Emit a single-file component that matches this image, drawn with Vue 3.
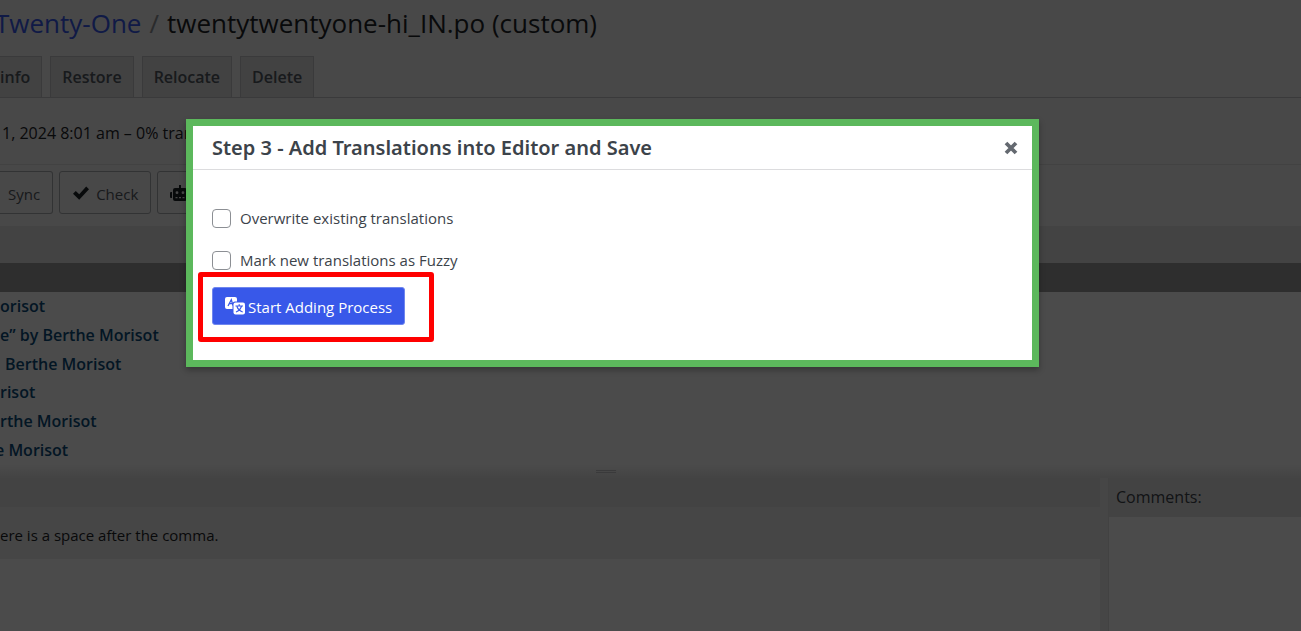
<template>
  <div class="screen">
    <main class="page">
      <header class="page-head">
        <h1 class="title">
          <a href="#" class="crumb">Twenty-One</a>
          <span class="slash">/</span>
          <span>twentytwentyone-hi_IN.po (custom)</span>
        </h1>
        <nav class="tabs">
          <a v-for="tab in tabs" :key="tab" href="#" class="tab">{{ tab }}</a>
        </nav>
      </header>

      <p class="status">1, 2024 8:01 am – 0% translated</p>

      <div class="toolbar">
        <button type="button" class="tool tool-first">Sync</button>
        <button type="button" class="tool">
          <svg class="tool-icon" viewBox="0 0 18 16" aria-hidden="true">
            <path d="M1 8.8 3.8 6l3.4 3.3L14.2 1.6 17 4.3 7.2 14.8z" fill="currentColor" />
          </svg>
          Check
        </button>
        <button type="button" class="tool" aria-label="Auto">
          <svg class="tool-icon robot" viewBox="0 0 20 16" aria-hidden="true">
            <path
              fill="currentColor"
              fill-rule="evenodd"
              d="M9 0h2v3h4a2 2 0 0 1 2 2v9a2 2 0 0 1-2 2H5a2 2 0 0 1-2-2V5a2 2 0 0 1 2-2h4zM7 6.3a1.4 1.4 0 1 0 0 2.8 1.4 1.4 0 0 0 0-2.8zm6 0a1.4 1.4 0 1 0 0 2.8 1.4 1.4 0 0 0 0-2.8zM5.5 12v1.3h2V12zm3.5 0v1.3h2V12zm3.5 0v1.3h2V12zM0 8a1 1 0 0 1 1-1h1v6H1a1 1 0 0 1-1-1zM18 7h1a1 1 0 0 1 1 1v4a1 1 0 0 1-1 1h-1z"
            />
          </svg>
        </button>
      </div>

      <div class="list-head"></div>
      <div class="selected-row"></div>
      <ul class="strings">
        <li v-for="row in rows" :key="row">{{ row }}</li>
      </ul>
      <div class="splitter"><span class="grip"></span></div>

      <section class="editor">
        <div class="source">
          <div class="source-head"></div>
          <p class="source-text">ere is a space after the comma.</p>
          <textarea class="target" aria-label="Translation"></textarea>
        </div>
        <div class="comments">
          <label for="comments" class="comments-label">Comments:</label>
          <textarea id="comments" class="comments-box"></textarea>
        </div>
      </section>
    </main>

    <div class="overlay">
      <div class="modal" role="dialog" aria-labelledby="modal-title">
        <div class="modal-head">
          <h2 id="modal-title">Step 3 - Add Translations into Editor and Save</h2>
          <button type="button" class="close" aria-label="Close">
            <svg viewBox="0 0 14 14" aria-hidden="true">
              <path d="M2 2l10 10M12 2L2 12" stroke="currentColor" stroke-width="3.8" />
            </svg>
          </button>
        </div>
        <div class="modal-body">
          <label class="option">
            <input v-model="overwrite" type="checkbox">
            Overwrite existing translations
          </label>
          <label class="option">
            <input v-model="fuzzy" type="checkbox">
            Mark new translations as Fuzzy
          </label>
          <div class="action">
            <button type="button" class="start">
              <svg viewBox="0 0 20 18" aria-hidden="true">
                <rect x="0" y="0" width="12" height="12" rx="2" fill="#fff" />
                <path d="M3 9 6.3 2.8 8 8.5M4.3 6.7h3" fill="none" stroke="#3858e9" stroke-width="1.3" />
                <rect x="7.5" y="4.5" width="13" height="13" rx="2.5" fill="#3858e9" />
                <rect x="8.5" y="5.5" width="11.5" height="12" rx="2" fill="#fff" />
                <path d="M10.5 9h7.5M14.2 7.3V9M16.5 9c-.8 3-2.8 5-5.5 6M12 9.5c.8 2.5 3 4.5 5.7 5.5" fill="none" stroke="#3858e9" stroke-width="1.2" />
              </svg>
              Start Adding Process
            </button>
            <span class="highlight"></span>
          </div>
        </div>
      </div>
    </div>
  </div>
</template>

<script setup>
import { ref } from 'vue';

const tabs = ['info', 'Restore', 'Relocate', 'Delete'];

const rows = [
  'orisot',
  'e” by Berthe Morisot',
  'Berthe Morisot',
  'risot',
  'rthe Morisot',
  'e Morisot'
];

const overwrite = ref(false);
const fuzzy = ref(false);
</script>

<style>
body {
  margin: 0;
  background: #f0f0f1;
}
</style>

<style scoped>
.screen {
  position: relative;
  min-height: 100vh;
  overflow: hidden;
  font-family: "Open Sans", "Noto Sans", sans-serif;
  font-size: 15px;
  color: #3c434a;
}

.screen * {
  box-sizing: border-box;
}

.page {
  display: flex;
  flex-direction: column;
  min-height: 100vh;
  background: #f0f0f1;
}

.page-head {
  display: flex;
  flex-direction: column;
  justify-content: space-between;
  height: 98px;
  border-bottom: 1px solid #c3c4c7;
}

.title {
  display: flex;
  gap: 8px;
  margin: 0 0 0 -5px;
  font-size: 26px;
  font-weight: 400;
  line-height: 46px;
  color: #1d2327;
}

.crumb {
  color: #3858e9;
  text-decoration: none;
}

.slash {
  color: #8c8f94;
}

.tabs {
  display: flex;
  gap: 8px;
}

.tab {
  padding: 0 11px;
  border: 1px solid #c3c4c7;
  border-bottom: 0;
  background: #dcdcde;
  color: #50575e;
  font-size: 16px;
  font-weight: 600;
  line-height: 40px;
  text-decoration: none;
}

.tab:first-child {
  padding-left: 0;
  border-left: 0;
}

.status {
  margin: 0;
  padding-left: 2px;
  height: 67px;
  border-bottom: 1px solid #dcdcde;
  font-size: 16px;
  line-height: 70px;
  color: #1d2327;
}

.toolbar {
  display: flex;
  gap: 6px;
  height: 61px;
  padding-top: 6px;
}

.tool {
  display: flex;
  align-items: center;
  gap: 6px;
  height: 43px;
  padding: 2px 12px 0;
  border: 1px solid #a7aaad;
  border-radius: 3px;
  background: transparent;
  color: #50575e;
  font-family: inherit;
  font-size: 15px;
}

.tool-first {
  padding-left: 8px;
  border-left: 0;
  border-radius: 0 3px 3px 0;
}

.tool-icon {
  width: 18px;
  height: 16px;
  margin-bottom: 2px;
  color: #1d2327;
}

.robot {
  width: 20px;
}

.list-head {
  height: 37px;
  background: #e2e2e2;
}

.selected-row {
  height: 29px;
  background: #999;
}

.strings {
  display: grid;
  grid-template-rows: repeat(6, 1fr);
  align-items: center;
  height: 172px;
  margin: 0;
  padding: 0;
  background: #fcfcfc;
  list-style: none;
  font-size: 16px;
  font-weight: 600;
  color: #0a4b78;
}

.strings li:nth-child(3) {
  padding-left: 5px;
}

.strings li:last-child {
  margin-left: -5px;
}

.splitter {
  display: flex;
  justify-content: center;
  align-items: center;
  height: 14px;
  padding-right: 90px;
  background: linear-gradient(#fcfcfc, #e2e2e2);
}

.grip {
  width: 20px;
  height: 3px;
  border: solid #c3c4c7;
  border-width: 1px 0;
}

.editor {
  display: flex;
  flex: 1;
  gap: 8px;
  background: #ebebeb;
}

.source {
  display: flex;
  flex: 1;
  flex-direction: column;
}

.source-head {
  height: 29px;
  background: #e2e2e2;
}

.source-text {
  margin: 0;
  height: 52px;
  line-height: 56px;
  color: #1d2327;
}

.target,
.comments-box {
  flex: 1;
  width: 100%;
  margin: 0;
  border: 0;
  background: #fcfcfc;
  resize: none;
}

.comments {
  display: flex;
  flex-direction: column;
  width: 193px;
  border-left: 1px solid #dcdcde;
}

.comments-label {
  padding-left: 7px;
  height: 39px;
  background: #e2e2e2;
  font-size: 16px;
  line-height: 38px;
}

.overlay {
  position: absolute;
  inset: 0;
  padding: 119px 262px 0 186px;
  background: rgba(0, 0, 0, 0.7);
}

.modal {
  border: 7px solid #5cb85c;
  background: #fff;
  box-shadow: 0 3px 6px rgba(0, 0, 0, 0.3);
}

.modal-head {
  display: flex;
  align-items: center;
  justify-content: space-between;
  height: 44px;
  padding: 0 14px 0 19px;
  border-bottom: 1px solid #dcdcde;
}

.modal-head h2 {
  margin: 0;
  font-family: "Noto Sans", "Open Sans", sans-serif;
  font-size: 20px;
  font-weight: 600;
  white-space: nowrap;
}

.close {
  padding: 0;
  border: 0;
  background: none;
  color: #646970;
}

.close svg {
  display: block;
  width: 14px;
  height: 14px;
}

.modal-body {
  display: flex;
  flex-direction: column;
  align-items: flex-start;
  padding: 37px 19px 35px;
}

.option {
  display: flex;
  align-items: center;
  gap: 9px;
  height: 22px;
  margin-bottom: 20px;
}

.option input {
  appearance: none;
  width: 19px;
  height: 19px;
  margin: 0;
  border: 1px solid #8c8f94;
  border-radius: 4px;
  background: #fff;
}

.action {
  position: relative;
  margin-top: -4px;
}

.start {
  display: flex;
  align-items: center;
  gap: 3px;
  height: 38px;
  padding: 2px 12px 0;
  border: 1px solid #6f86ee;
  border-radius: 3px;
  background: #3858e9;
  color: #fff;
  font-family: inherit;
  font-size: 15px;
}

.start svg {
  width: 20px;
  height: 18px;
  margin-bottom: 2px;
}

/* marker drawn around the button */
.highlight {
  position: absolute;
  inset: -15px -29px -17px -14px;
  border: 5px solid #f00;
  border-radius: 3px;
  pointer-events: none;
}
</style>
